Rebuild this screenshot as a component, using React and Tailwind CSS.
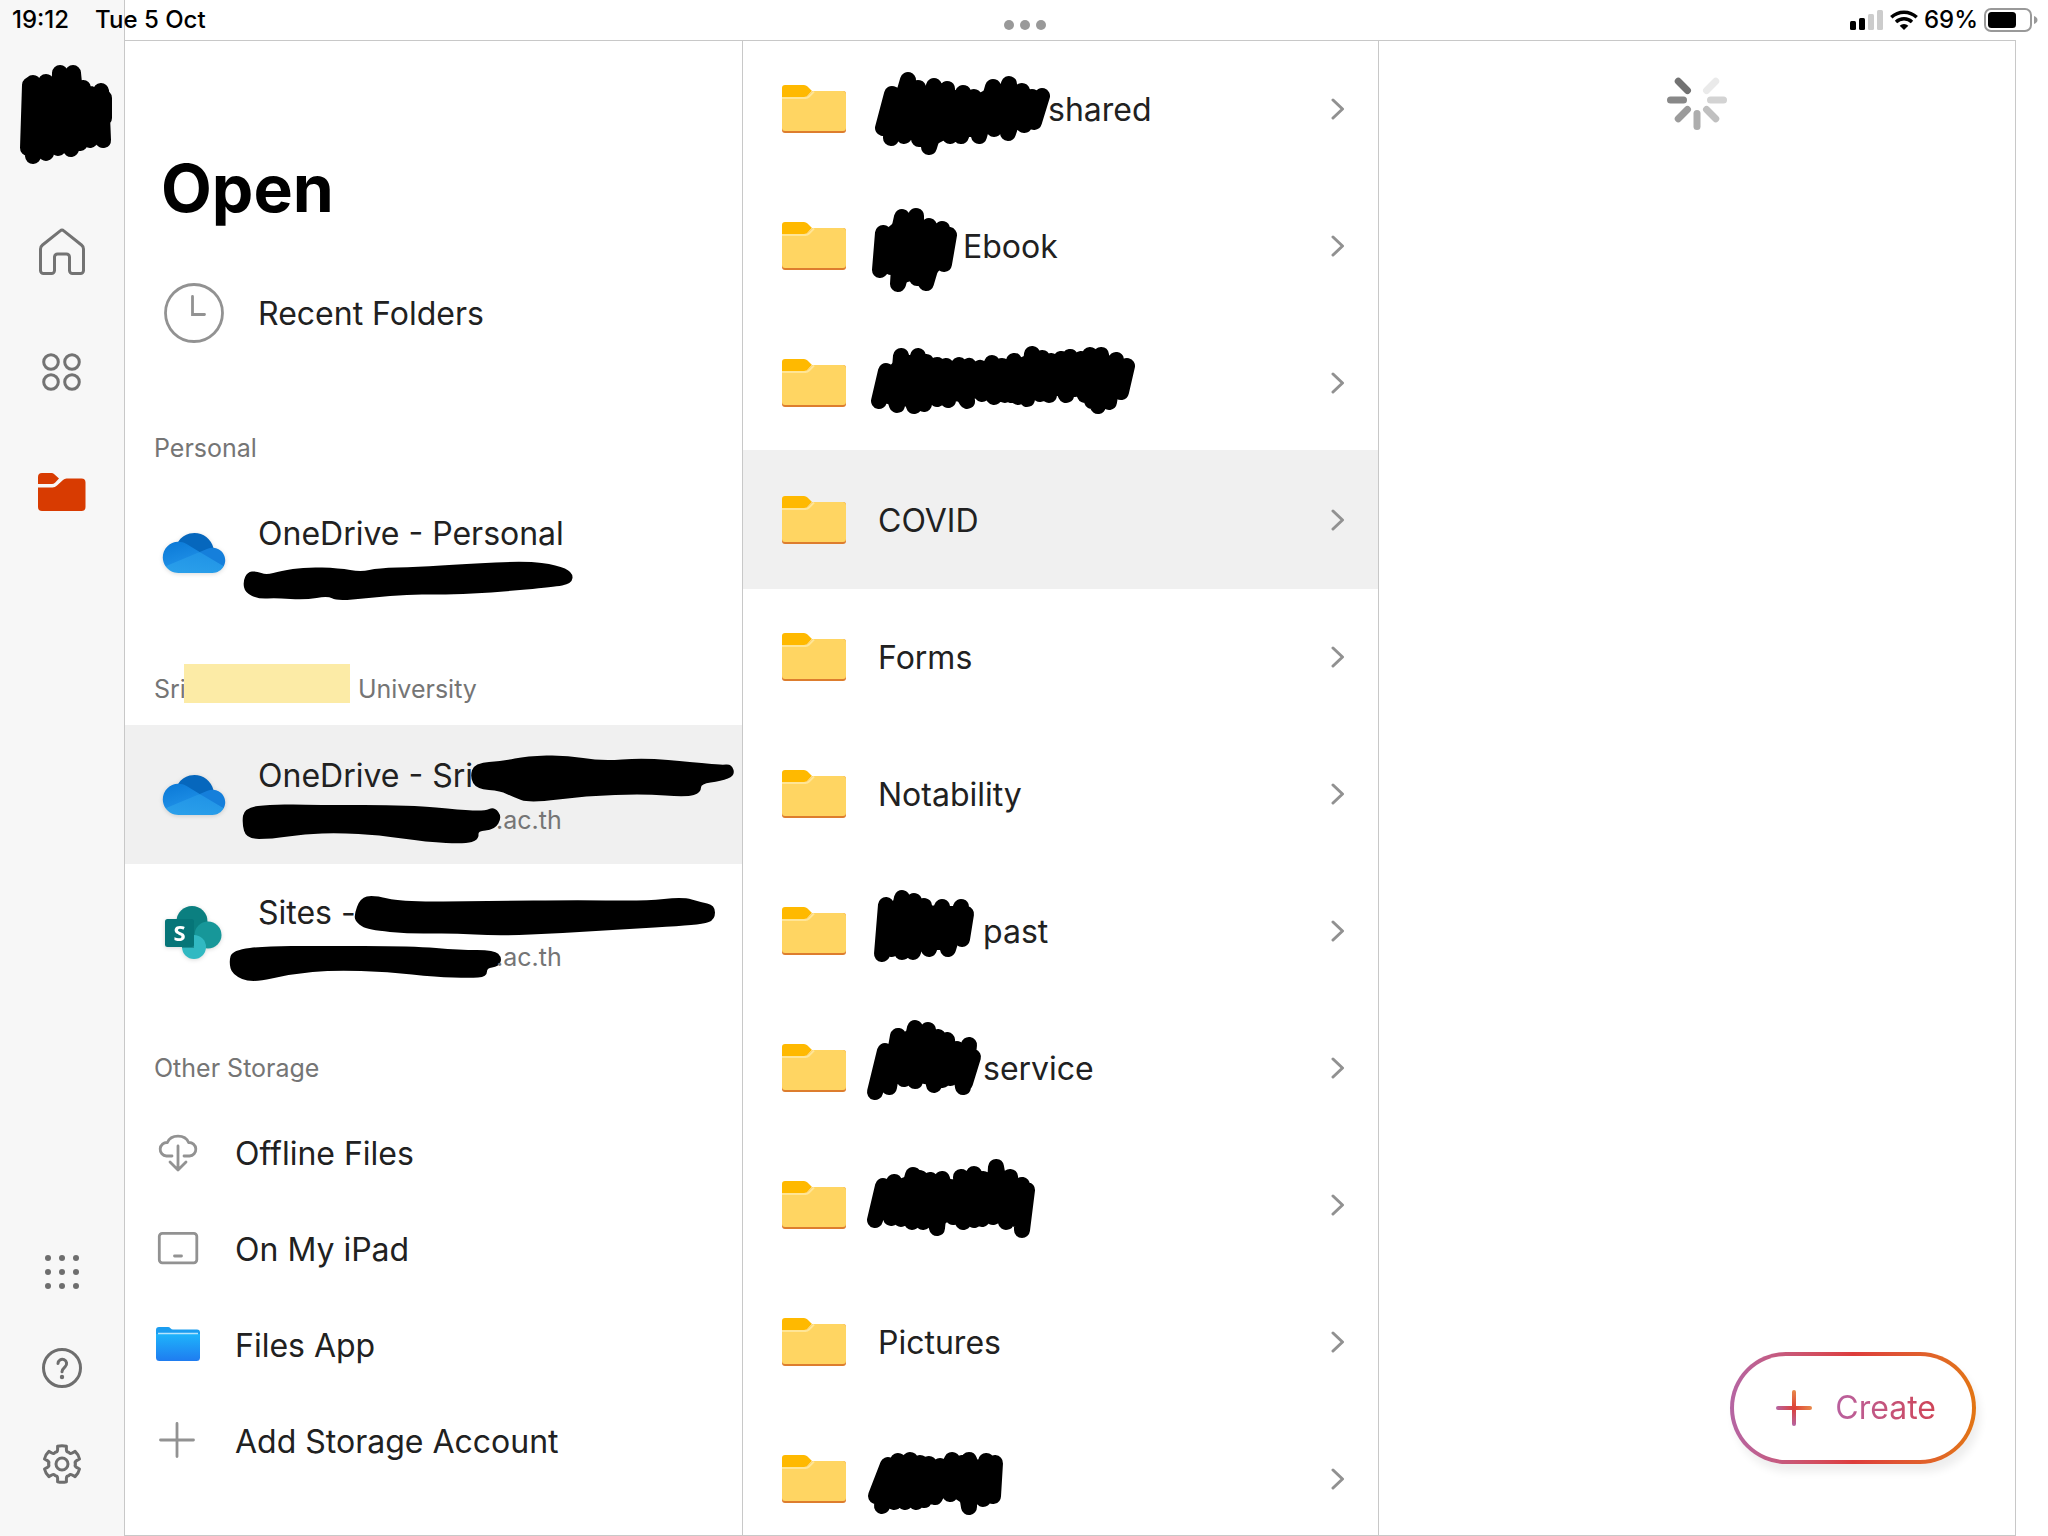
import React from 'react'

const scribbles = {
  avatar: {
    top: [[30, 85], [33, 83], [46, 82], [60, 73], [73, 73], [83, 88], [90, 94], [101, 91], [104, 98]],
    bottom: [[28, 148], [33, 156], [46, 153], [58, 148], [71, 149], [80, 143], [90, 140], [103, 140], [104, 118]],
  },
  shared: {
    top: [[14, -15], [30, -29], [40, -21], [56, -23], [69, -20], [85, -16], [96, -12], [115, -22], [131, -25], [144, -18], [154, -12], [164, -13]],
    bottom: [[5, 19], [13, 29], [26, 27], [41, 30], [51, 38], [72, 27], [83, 27], [101, 27], [116, 20], [130, 24], [146, 16], [156, 13]],
  },
  ebook: {
    top: [[5, -13], [24, -29], [38, -30], [51, -20], [64, -17], [71, -11]],
    bottom: [[2, 24], [13, 21], [20, 38], [39, 32], [48, 37], [66, 18]],
  },
  third: {
    top: [[8, -12], [23, -27], [40, -27], [48, -21], [59, -18], [68, -17], [81, -18], [91, -17], [102, -15], [114, -20], [124, -17], [136, -22], [154, -29], [164, -25], [173, -22], [183, -24], [192, -26], [203, -24], [212, -28], [223, -28], [238, -23], [249, -17]],
    bottom: [[1, 18], [19, 22], [36, 23], [46, 21], [59, 16], [70, 17], [89, 18], [104, 11], [116, 14], [127, 12], [133, 12], [140, 14], [149, 16], [162, 11], [171, 12], [188, 12], [197, 6], [207, 12], [214, 18], [220, 23], [231, 19], [243, 9]],
  },
  past: {
    top: [[8, -26], [24, -33], [36, -30], [46, -25], [64, -24], [83, -24], [88, -17]],
    bottom: [[4, 23], [13, 18], [24, 21], [35, 21], [51, 18], [70, 18], [84, 8]],
  },
  service: {
    top: [[7, -17], [20, -32], [37, -40], [50, -38], [60, -31], [69, -28], [79, -19], [91, -23], [95, -11]],
    bottom: [[-3, 24], [11, 19], [26, 11], [37, 13], [56, 17], [64, 12], [72, 10], [85, 19], [87, 15]],
  },
  ninth: {
    top: [[5, -19], [16, -23], [35, -30], [42, -27], [52, -25], [64, -26], [72, -18], [83, -28], [96, -31], [105, -26], [118, -38], [132, -28], [144, -20], [149, -15]],
    bottom: [[-3, 15], [13, 13], [23, 14], [34, 17], [45, 17], [59, 23], [75, 12], [85, 17], [96, 15], [104, 14], [115, 12], [128, 17], [138, 14], [144, 25]],
  },
  last: {
    top: [[10, -14], [20, -18], [32, -19], [42, -16], [51, -15], [62, -13], [74, -19], [84, -16], [91, -19], [108, -18], [117, -16]],
    bottom: [[-2, 17], [4, 27], [16, 23], [27, 23], [38, 23], [46, 21], [57, 18], [72, 15], [91, 28], [105, 20], [115, 17]],
  },
}

const marks = {
  personal: [[244, 582], [248, 573], [256, 572], [266, 576], [281, 572], [305, 568], [339, 569], [361, 573], [378, 569], [417, 568], [465, 565], [526, 562], [557, 566], [572, 573], [571, 583], [553, 586], [499, 591], [446, 594], [412, 593], [368, 597], [337, 600], [328, 595], [305, 599], [276, 597], [259, 598], [246, 592]],
  account: [[472, 777], [476, 764], [504, 762], [528, 757], [567, 756], [601, 762], [645, 759], [693, 763], [722, 766], [732, 765], [735, 775], [722, 780], [701, 783], [701, 792], [688, 796], [645, 793], [587, 795], [531, 802], [514, 796], [502, 790], [478, 788]],
  accountMail: [[243, 823], [245, 809], [271, 805], [315, 806], [412, 806], [460, 811], [485, 812], [494, 808], [501, 817], [494, 829], [477, 830], [478, 839], [465, 843], [427, 841], [378, 834], [339, 832], [305, 833], [271, 838], [247, 838]],
  sites: [[355, 915], [361, 899], [373, 896], [402, 903], [485, 902], [582, 901], [645, 902], [683, 898], [700, 903], [714, 906], [714, 919], [703, 923], [679, 925], [630, 928], [562, 932], [499, 935], [451, 932], [412, 933], [368, 929], [357, 922]],
  sitesMail: [[230, 962], [233, 951], [267, 947], [315, 947], [412, 947], [460, 951], [494, 951], [501, 958], [498, 966], [486, 967], [486, 976], [470, 977], [436, 976], [388, 971], [334, 969], [291, 973], [252, 982], [233, 974]],
}

const folders = [
  { scribble: 'shared', width: 170, name: 'shared' },
  { scribble: 'ebook', width: 85, name: 'Ebook' },
  { scribble: 'third', width: 258 },
  { name: 'COVID', selected: true },
  { name: 'Forms' },
  { name: 'Notability' },
  { scribble: 'past', width: 105, name: 'past' },
  { scribble: 'service', width: 105, name: 'service' },
  { scribble: 'ninth', width: 158 },
  { name: 'Pictures' },
  { scribble: 'last', width: 126 },
]

function Scribble({ name, ...props }) {
  const { top, bottom } = scribbles[name]
  const zigzag = top.flatMap((p, i) => [bottom[i], p])
  return (
    <svg aria-hidden="true" className="shrink-0 overflow-visible" stroke="#000" strokeWidth="16" strokeLinejoin="round" strokeLinecap="round" {...props}>
      <polygon points={[...top, ...[...bottom].reverse()].join(' ')} strokeWidth="2" />
      <polyline points={zigzag.join(' ')} fill="none" />
    </svg>
  )
}

// Closed blob smoothed through the midpoints of its outline
function Mark({ name, x, y, width }) {
  const pts = marks[name]
  const mid = (a, b) => `${(a[0] + b[0]) / 2} ${(a[1] + b[1]) / 2}`
  const d = pts.map((p, i) => `Q${p[0]} ${p[1]} ${mid(p, pts[(i + 1) % pts.length])}`).join('')
  return (
    <svg aria-hidden="true" width={width} height="44" viewBox={`${x} ${y} ${width} 44`} className="shrink-0 overflow-visible">
      <path d={`M${mid(pts[pts.length - 1], pts[0])}${d}Z`} stroke="#000" strokeWidth="2" />
    </svg>
  )
}

function FolderIcon() {
  return (
    <svg width="64" height="48" viewBox="0 0 64 48" className="shrink-0">
      <path d="M0 12h24l7-6h30a3 3 0 0 1 3 3v36a3 3 0 0 1-3 3H3a3 3 0 0 1-3-3z" fill="#dd7d2e" />
      <path d="M0 12h24l7-6h30a3 3 0 0 1 3 3v34a3 3 0 0 1-3 3H3a3 3 0 0 1-3-3z" fill="#ffd562" />
      <path d="M0 13h23.500q2 0 3.500-1.500L32 6.500" fill="none" stroke="#ffe596" strokeWidth="2" />
      <path d="M0 12V3a3 3 0 0 1 3-3h19q2 0 3.500 1.500L30 6l-4.500 4.500Q24 12 22 12z" fill="#ffb900" />
    </svg>
  )
}

function Chevron() {
  return (
    <svg width="14" height="22" viewBox="0 0 14 22" fill="none" stroke="#919191" strokeWidth="3" strokeLinecap="round" strokeLinejoin="round" className="shrink-0">
      <path d="M2 2l9.500 9L2 20" />
    </svg>
  )
}

function OneDriveIcon() {
  return (
    <svg width="64" height="40" viewBox="0 0 1030 660" className="shrink-0 drop-shadow-sm">
      <defs>
        <linearGradient id="od-left" x1="0" y1="0" x2="0.4" y2="1">
          <stop offset="0" stopColor="#0a78d6" />
          <stop offset="1" stopColor="#1e8fe6" />
        </linearGradient>
        <linearGradient id="od-front" x1="0.3" y1="1" x2="0.7" y2="0">
          <stop offset="0" stopColor="#2a9fea" />
          <stop offset="1" stopColor="#2093e6" />
        </linearGradient>
      </defs>
      <path fill="#0667bd" d="M622.292,445.338l212.613-203.327C790.741,69.804,615.338-33.996,443.13,10.168C365.58,30.056,298.224,78.13,254.209,145.005C257.5,144.922,622.292,445.338,622.292,445.338z" />
      <path fill="url(#od-left)" d="M392.776,183.283l-0.01,0.035c-40.626-25.162-87.479-38.462-135.267-38.397c-1.104,0-2.189,0.07-3.291,0.083C112.064,146.765-1.74,263.423,0.02,405.567c0.638,51.562,16.749,101.743,46.244,144.04l318.528-39.894l244.209-196.915L392.776,183.283z" />
      <path fill="#157fdb" d="M834.905,242.012c-4.674-0.312-9.371-0.528-14.123-0.528c-28.523-0.028-56.749,5.798-82.93,17.117l-0.006-0.022l-128.844,54.22l142.041,175.456l253.934,61.728c54.799-101.732,16.752-228.625-84.98-283.424c-26.287-14.16-55.301-22.529-85.091-24.546V242.012z" />
      <path fill="url(#od-front)" d="M46.264,549.607C94.359,618.756,173.27,659.966,257.5,659.922h563.281c76.946,0.022,147.691-42.202,184.195-109.937L609.001,312.798L46.264,549.607z" />
    </svg>
  )
}

function SharePointIcon() {
  return (
    <svg width="64" height="54" viewBox="-3 0 64 54" className="shrink-0 drop-shadow-sm">
      <circle cx="27" cy="15.500" r="15.500" fill="#0b7f80" />
      <circle cx="43" cy="29" r="13.500" fill="#179799" />
      <circle cx="29" cy="41" r="12" fill="#31b9c2" />
      <path d="M14 16h15v26H17z" fill="#056568" opacity="0.5" />
      <rect y="13" width="29" height="28" rx="2.500" fill="#067578" />
      <text x="14.500" y="34.500" textAnchor="middle" fontSize="22" fontWeight="700" fill="#fff" fontFamily="Open Sans, sans-serif">S</text>
    </svg>
  )
}

function HomeIcon() {
  return (
    <svg width="46" height="48" viewBox="0 0 46 48" fill="none" stroke="#737373" strokeWidth="3" strokeLinejoin="round">
      <path d="M21.200 2.800q1.800-1.600 3.600 0L42.500 17q2 1.600 2 4v21.500a3 3 0 0 1-3 3H33.500a3 3 0 0 1-3-3V29a3 3 0 0 0-3-3h-9a3 3 0 0 0-3 3v13.500a3 3 0 0 1-3 3H4.500a3 3 0 0 1-3-3V21q0-2.400 2-4z" />
    </svg>
  )
}

function AppsIcon() {
  return (
    <svg width="40" height="40" viewBox="0 0 40 40" fill="none" stroke="#737373" strokeWidth="3">
      <circle cx="9" cy="10" r="7.300" />
      <circle cx="30" cy="10" r="7.300" />
      <circle cx="9" cy="30" r="7.300" />
      <circle cx="30" cy="30" r="7.300" />
    </svg>
  )
}

function OpenIcon() {
  return (
    <svg width="48" height="38" viewBox="0 0 48 38" fill="#d83b01">
      <path d="M0 11V4a4 4 0 0 1 4-4h9.500q1.500 0 2.800 1.200L21 5.500l-4 4.200Q15.500 11 14 11z" />
      <path d="M0 14.500h14.500q2.500 0 4.500-2l6-5.500q1.500-1.500 3.500-1.500H43.500a4 4 0 0 1 4 4V34a4 4 0 0 1-4 4H4a4 4 0 0 1-4-4z" />
    </svg>
  )
}

function GridIcon() {
  return (
    <svg width="36" height="36" viewBox="0 0 36 36" fill="#6e6e6e">
      {[4, 18, 32].map((y) => [4, 18, 32].map((x) => <circle key={`${x}-${y}`} cx={x} cy={y} r="3" />))}
    </svg>
  )
}

function HelpIcon() {
  return (
    <svg width="42" height="42" viewBox="0 0 42 42" fill="none" stroke="#6e6e6e" strokeWidth="3" strokeLinecap="round">
      <circle cx="21" cy="21" r="18.500" />
      <path d="M17 16.500a4.300 4.300 0 1 1 7.200 3.200c-1.800 1.600-3.200 2.600-3.200 5.100" />
      <circle cx="21" cy="30" r="2.200" fill="#6e6e6e" stroke="none" />
    </svg>
  )
}

function GearIcon() {
  const at = (deg, r) => {
    const a = ((deg - 90) * Math.PI) / 180
    return `${(21 + r * Math.cos(a)).toFixed(1)} ${(21 + r * Math.sin(a)).toFixed(1)}`
  }
  const teeth = [0, 60, 120, 180, 240, 300].map(
    (t) => `L${at(t - 14, 18.2)}Q${at(t, 19)} ${at(t + 14, 18.2)}L${at(t + 17, 15)}Q${at(t + 21, 12.5)} ${at(t + 30, 13.5)}Q${at(t + 39, 12.5)} ${at(t + 43, 15)}`
  )
  return (
    <svg width="42" height="42" viewBox="0 0 42 42" fill="none" stroke="#6e6e6e" strokeWidth="3" strokeLinejoin="round">
      <path d={`M${teeth.join('').slice(1)}Z`} />
      <circle cx="21" cy="21" r="6" />
    </svg>
  )
}

function CloudDownIcon() {
  return (
    <svg width="44" height="40" viewBox="-2 0 44 40" fill="none" stroke="#929292" strokeWidth="2.800" strokeLinecap="round" strokeLinejoin="round">
      <path d="M14 24H8.500A6.700 6.700 0 0 1 9.400 10.500A11.200 9.500 0 0 1 30.600 10.500A6.700 6.700 0 0 1 31.500 24H26M20 14v24M12 30l8 8 8-8" />
    </svg>
  )
}

function TabletIcon() {
  return (
    <svg width="44" height="34" viewBox="0 0 44 34" fill="none" stroke="#929292" strokeWidth="2.800" strokeLinecap="round">
      <rect x="3.300" y="2.300" width="37.500" height="29.500" rx="3" />
      <path d="M18.500 25h7" />
    </svg>
  )
}

function FilesIcon() {
  return (
    <svg width="44" height="34" viewBox="0 0 44 34">
      <defs>
        <linearGradient id="files" x1="0" y1="0" x2="0" y2="1">
          <stop offset="0" stopColor="#1eb4fb" />
          <stop offset="1" stopColor="#1f7cf0" />
        </linearGradient>
      </defs>
      <path d="M0 3a3 3 0 0 1 3-3h9q1.500 0 2.500 1.200T17 2.500h24a3 3 0 0 1 3 3V10H0z" fill="#1b9df0" />
      <path d="M0 7h44v23.500a3.500 3.500 0 0 1-3.500 3.500h-37A3.500 3.500 0 0 1 0 30.500z" fill="url(#files)" />
      <path d="M2 6.500h40" stroke="#b5e4fd" strokeWidth="1.500" />
    </svg>
  )
}

function PlusIcon() {
  return (
    <svg width="44" height="36" viewBox="0 0 44 36" stroke="#929292" strokeWidth="2.800" strokeLinecap="round">
      <path d="M21 1.500v33M4.500 18h33" />
    </svg>
  )
}

function StatusBar() {
  return (
    <header className="absolute inset-x-0 top-0 h-10 flex items-center justify-between px-[10px] text-[24px] leading-[30px] font-medium text-black">
      <div className="flex flex-1 gap-[26px] pl-0.5">
        <span>19:12</span>
        <span>Tue 5 Oct</span>
      </div>
      <button aria-label="Multitasking" className="flex gap-[6px] pt-[10px]">
        <span className="size-[10px] rounded-full bg-[#999]" />
        <span className="size-[10px] rounded-full bg-[#999]" />
        <span className="size-[10px] rounded-full bg-[#999]" />
      </button>
      <div className="flex flex-1 items-center justify-end gap-[6px]">
        <svg width="34" height="20" viewBox="0 0 34 20">
          <rect y="11" width="6" height="9" rx="1.500" />
          <rect x="9" y="8" width="6" height="12" rx="1.500" />
          <rect x="18" y="4" width="6" height="16" rx="1.500" fill="#ccc" />
          <rect x="27" width="6" height="20" rx="1.500" fill="#ccc" />
        </svg>
        <svg width="28" height="20" viewBox="0 0 28 20" fill="none" stroke="#000" strokeWidth="3.400">
          <path d="M1.300 7.300a18.300 18.300 0 0 1 25.400 0M6 12a11.600 11.600 0 0 1 16 0" />
          <path d="M14 20l-4.300-4.300a6.200 6.200 0 0 1 8.600 0z" fill="#000" stroke="none" />
        </svg>
        <span>69%</span>
        <svg width="54" height="24" viewBox="0 0 54 24">
          <rect x="1" y="1" width="46" height="22" rx="6" fill="none" stroke="#999" strokeWidth="2" />
          <rect x="4" y="4" width="28" height="16" rx="3.500" />
          <path d="M50 8q3.500 1.500 3.500 4T50 16z" fill="#999" />
        </svg>
      </div>
    </header>
  )
}

function Sidebar() {
  return (
    <nav className="w-[125px] shrink-0 flex flex-col items-center justify-between border-r border-[#c8c8c8] bg-[#f7f7f7] pt-[62px] pb-6">
      <div className="flex flex-col items-center">
        <button aria-label="Account" className="mb-[26px]">
          <Scribble name="avatar" width="92" height="104" viewBox="16 62 92 104" />
        </button>
        <button aria-label="Home" className="size-[120px] flex items-center justify-center"><HomeIcon /></button>
        <button aria-label="Apps" className="size-[120px] flex items-center justify-center"><AppsIcon /></button>
        <button aria-label="Open" className="size-[120px] flex items-center justify-center"><OpenIcon /></button>
      </div>
      <div className="flex flex-col items-center">
        <button aria-label="All apps" className="size-24 flex items-center justify-center"><GridIcon /></button>
        <button aria-label="Help" className="size-24 flex items-center justify-center"><HelpIcon /></button>
        <button aria-label="Settings" className="size-24 flex items-center justify-center"><GearIcon /></button>
      </div>
    </nav>
  )
}

function SectionLabel({ children }) {
  return <h2 className="h-[103px] shrink-0 flex items-end pl-[29px] pb-5 text-[25px] leading-8 text-[#757575]">{children}</h2>
}

function StorageRow({ icon, label }) {
  return (
    <button className="h-24 shrink-0 flex items-center gap-[35px] pl-[31px] text-left">
      {icon}
      <span className="pt-1">{label}</span>
    </button>
  )
}

function Places() {
  return (
    <section className="min-w-0 flex flex-col overflow-hidden border-r border-[#c8c8c8]">
      <h1 className="h-[203px] shrink-0 pt-[107px] pl-9 text-[66px] leading-20 font-bold text-black">Open</h1>
      <button className="h-[137px] shrink-0 flex items-center gap-[34px] pl-[39px] text-left">
        <svg width="60" height="60" viewBox="0 0 60 60" fill="none" stroke="#929292" strokeWidth="2.800" strokeLinecap="round">
          <circle cx="30" cy="30" r="28.500" />
          <path d="M28.500 13.500v18h12" />
        </svg>
        <span className="pt-0.5">Recent Folders</span>
      </button>

      <SectionLabel>Personal</SectionLabel>
      <button className="h-[138px] shrink-0 flex items-center gap-8 pl-[37px] text-left">
        <OneDriveIcon />
        <span className="flex flex-col pt-1.5 leading-[44px]">
          <span>OneDrive - Personal</span>
          <Mark name="personal" x={258} y={556} width={314} />
        </span>
      </button>

      <SectionLabel>
        Sri
        <span className="-ml-0.5 mr-2 mb-0.5 h-[39px] w-[166px] self-end bg-[#fceba6]" />
        University
      </SectionLabel>
      <button className="h-[139px] shrink-0 flex items-center gap-8 pl-[37px] text-left bg-[#f0f0f0]">
        <OneDriveIcon />
        <span className="flex flex-col pt-1.5 leading-[44px]">
          <span className="flex items-center">OneDrive - Sri<Mark name="account" x={474} y={754} width={260} /></span>
          <span className="flex items-center text-[25px] text-[#757575]"><Mark name="accountMail" x={258} y={798} width={238} />.ac.th</span>
        </span>
      </button>
      <button className="h-[137px] shrink-0 flex items-center gap-8 pl-[37px] text-left">
        <SharePointIcon />
        <span className="flex flex-col pt-1 leading-[44px]">
          <span className="flex items-center">Sites -<Mark name="sites" x={356} y={891} width={358} /></span>
          <span className="flex items-center text-[25px] text-[#757575]"><Mark name="sitesMail" x={258} y={935} width={238} />.ac.th</span>
        </span>
      </button>

      <SectionLabel>Other Storage</SectionLabel>
      <StorageRow icon={<CloudDownIcon />} label="Offline Files" />
      <StorageRow icon={<TabletIcon />} label="On My iPad" />
      <StorageRow icon={<FilesIcon />} label="Files App" />
      <StorageRow icon={<PlusIcon />} label="Add Storage Account" />
    </section>
  )
}

function FolderList() {
  return (
    <ul className="min-w-0 overflow-hidden border-r border-[#c8c8c8]">
      {folders.map((f, i) => (
        <li key={i} className="first:-mt-px">
          <button className={`w-full flex items-center pl-[39px] pr-[33px] text-left ${f.selected ? '-my-px h-[139px] bg-[#f0f0f0]' : 'h-[137px]'}`}>
            <FolderIcon />
            <span className="ml-8 flex flex-1 items-center pt-0.5">
              {f.scribble && <Scribble name={f.scribble} width={f.width} height="100" viewBox={`0 -49 ${f.width} 100`} />}
              {f.name}
            </span>
            <Chevron />
          </button>
        </li>
      ))}
    </ul>
  )
}

function Spinner() {
  const spokes = [[45, '#eaeaea'], [90, '#d3d3d3'], [135, '#c0c0c0'], [180, '#adadad'], [225, '#9b9b9b'], [270, '#888'], [315, '#727272']]
  return (
    <svg role="img" aria-label="Loading" width="60" height="60" viewBox="-30 -30 60 60" strokeWidth="7" strokeLinecap="round" className="mt-[29px] self-center">
      {spokes.map(([deg, color]) => (
        <path key={deg} d="M0-13.500V-26.500" stroke={color} transform={`rotate(${deg})`} />
      ))}
    </svg>
  )
}

function CreateButton() {
  return (
    <button className="mr-[39px] mb-[71px] self-end rounded-full bg-linear-to-r from-[#b565a3] via-[#dd3c3c] to-[#e27512] p-1 shadow-[4px_8px_8px_rgba(0,0,0,0.07)]">
      <span className="h-[104px] flex items-center gap-[23px] rounded-full bg-white pl-[42px] pr-9">
        <svg width="36" height="36" viewBox="0 0 36 36" fill="none" strokeWidth="4" strokeLinecap="round">
          <defs>
            <linearGradient id="plus-h" gradientUnits="userSpaceOnUse" x1="0" y1="0" x2="36" y2="0">
              <stop offset="0" stopColor="#b565a3" />
              <stop offset="0.5" stopColor="#dd4038" />
              <stop offset="1" stopColor="#e88a4a" />
            </linearGradient>
            <linearGradient id="plus-v" gradientUnits="userSpaceOnUse" x1="0" y1="36" x2="0" y2="0">
              <stop offset="0" stopColor="#b565a3" />
              <stop offset="0.5" stopColor="#dd4038" />
              <stop offset="1" stopColor="#e88a4a" />
            </linearGradient>
          </defs>
          <path d="M2 18h32" stroke="url(#plus-h)" />
          <path d="M18 2v32" stroke="url(#plus-v)" />
        </svg>
        <span className="bg-linear-to-r from-[#b9609f] to-[#cf4355] bg-clip-text text-transparent">Create</span>
      </span>
    </button>
  )
}

export default function App() {
  return (
    <div className="relative h-screen flex overflow-hidden bg-white font-[Inter,sans-serif] text-[32px] leading-10 text-[#212121]">
      <Sidebar />
      <main className="min-w-0 flex-1 grid grid-cols-[618fr_636fr_636fr] grid-rows-[minmax(0,1fr)] mt-10 mr-8 border-y border-r border-[#c8c8c8]">
        <Places />
        <FolderList />
        <section className="min-w-0 flex flex-col justify-between">
          <Spinner />
          <CreateButton />
        </section>
      </main>
      <StatusBar />
    </div>
  )
}
